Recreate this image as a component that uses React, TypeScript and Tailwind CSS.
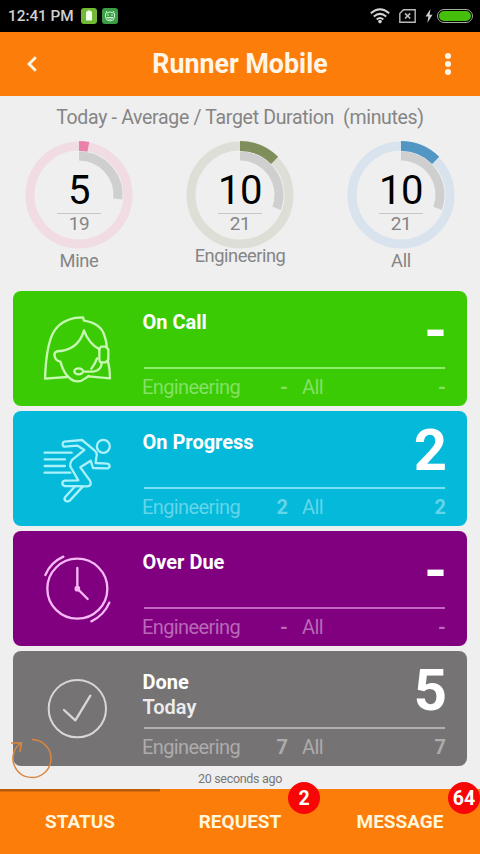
import type { ReactNode } from "react";
import clsx from "clsx";

type Gauge = {
  label: string;
  value: number;
  target: number;
  valueAngle: number;
  targetAngle: number;
  color: string;
  track: string;
};

type StatusCard = {
  title: string;
  subtitle?: string;
  count: string;
  engineering: string;
  all: string;
  bg: string;
  line: string;
  text: string;
  icon: ReactNode;
};

const gauges: Gauge[] = [
  {
    label: "Mine",
    value: 5,
    target: 19,
    valueAngle: 11,
    targetAngle: 96,
    color: "#e982ab",
    track: "#f2dce4",
  },
  {
    label: "Engineering",
    value: 10,
    target: 21,
    valueAngle: 45,
    targetAngle: 110,
    color: "#7f8f5c",
    track: "#dddfd6",
  },
  {
    label: "All",
    value: 10,
    target: 21,
    valueAngle: 45,
    targetAngle: 110,
    color: "#5296c4",
    track: "#d8e3ee",
  },
];

const cards: StatusCard[] = [
  {
    title: "On Call",
    count: "-",
    engineering: "-",
    all: "-",
    bg: "bg-[#3acb05]",
    line: "bg-[#8fec6c]",
    text: "text-[#83e164]",
    icon: <AgentIcon />,
  },
  {
    title: "On Progress",
    count: "2",
    engineering: "2",
    all: "2",
    bg: "bg-[#04b9da]",
    line: "bg-[#74e0f2]",
    text: "text-[#62d5ea]",
    icon: <RunnerIcon />,
  },
  {
    title: "Over Due",
    count: "-",
    engineering: "-",
    all: "-",
    bg: "bg-[#80007f]",
    line: "bg-[#c467c4]",
    text: "text-[#b968b9]",
    icon: <ClockIcon />,
  },
  {
    title: "Done",
    subtitle: "Today",
    count: "5",
    engineering: "7",
    all: "7",
    bg: "bg-[#757374]",
    line: "bg-[#b0aeaf]",
    text: "text-[#adabac]",
    icon: <CheckIcon />,
  },
];

const tabs = [
  { label: "STATUS", active: true },
  { label: "REQUEST", badge: 2 },
  { label: "MESSAGE", badge: 64 },
];

function CardIcon({ color, children }: { color: string; children: ReactNode }) {
  return (
    <svg
      className="w-[74px] h-[74px]"
      viewBox="120 80 222 222"
      fill="none"
      stroke={color}
      strokeWidth="7"
      strokeLinecap="round"
      strokeLinejoin="round"
    >
      {children}
    </svg>
  );
}

function AgentIcon() {
  return (
    <CardIcon color="#c9f8b4">
      <path d="M201 275 L135 280 C137 225 143 165 164 135 C183 108 215 96 249 96 L252 106 C282 111 306 126 313 150 C317 162 320 173 320 184" />
      <path d="M252 136 C242 170 218 192 183 197 C168 196 161 202 164 213 C166 222 173 228 181 229 C187 250 196 270 212 281 C225 291 242 290 256 279 L266 272" />
      <path d="M252 136 C261 160 276 180 298 192" />
      <path d="M303 184 H317 L325 192 V223 L317 231 H302 Q298 229 298 222 V194 Q298 187 303 184 Z" />
      <path d="M324 228 C328 244 330 262 330 279 L266 273" />
      <path d="M291 219 C287 232 280 242 274 250 M306 232 C303 250 293 258 280 259 H251" />
      <ellipse cx="236" cy="258" rx="13" ry="9" />
    </CardIcon>
  );
}

function RunnerIcon() {
  return (
    <CardIcon color="#a9f1fb">
      <circle cx="310" cy="123" r="19.5" />
      <path d="M134 142 H215 M134 162 H195 M134 182 H195 M134 202 H211" />
      <path d="M233 121 L193 124 C186 122 186 111 193 109 L246 104 L281 133 C290 140 293 147 289 156 L287 173 L322 175 C331 177 331 187 322 189 L279 188 L272 166 L241 186 L270 226 C275 236 271 242 263 243 L194 242 C185 240 185 228 194 226 L235 225 L212 185 C208 176 211 171 217 163 L253 134 Z" />
      <path d="M224 244 L195 276 C190 286 202 292 210 285 L248 244" />
    </CardIcon>
  );
}

function ClockIcon() {
  return (
    <CardIcon color="#f6b8f6">
      <circle cx="232" cy="190" r="90" />
      <circle cx="232" cy="190" r="5" />
      <path d="M232 128 V190 L263 221" />
      <path d="M136 149 Q151 112 190 94 M328 232 Q312 270 274 288" />
    </CardIcon>
  );
}

function CheckIcon() {
  return (
    <CardIcon color="#d8d6d7">
      <circle cx="232" cy="190" r="86" strokeWidth="6" />
      <path d="M192 194 L226 225 L271 151" />
    </CardIcon>
  );
}

function StatusBar() {
  return (
    <div className="h-8 bg-black flex items-center justify-between pl-2 pr-[7px]">
      <div className="flex items-center">
        <span className="w-[73px] pt-px text-[15.3px] font-medium text-[#d0d0d0] whitespace-nowrap">
          12:41 PM
        </span>
        <svg className="w-4 h-4" viewBox="0 0 16 16">
          <rect width="16" height="16" rx="3" fill="#72ba36" />
          <path d="M5 3.5h1.5V2.5h3v1H11v9H5z" fill="#f2ffe8" />
        </svg>
        <svg
          className="w-4 h-4 ml-[5px]"
          viewBox="0 0 16 16"
          fill="none"
          stroke="#c9f4cd"
        >
          <rect width="16" height="16" rx="3" fill="#3c9d46" stroke="none" />
          <path d="M4 3l1.3 1.4M12 3l-1.3 1.4M3.5 5.2Q8 2.8 12.5 5.2V9Q12 13 8 13T3.5 9ZM5 7h2M9 7h2M5 9.5h6Q9.5 11.5 8 11.5T5 9.5" />
        </svg>
      </div>
      <div className="flex items-center">
        <svg className="w-5 h-4" viewBox="0 0 20 16" fill="none" stroke="#d5d5d5">
          <path
            d="M.8 5.3Q10-2.7 19.2 5.3M3.8 8.6Q10 3.2 16.2 8.6M6.7 11.5Q10 8.6 13.3 11.5"
            strokeWidth="2"
          />
          <circle cx="10" cy="13.6" r="1.8" fill="#d5d5d5" stroke="none" />
        </svg>
        <svg
          className="w-[17px] h-[14px] ml-[9px]"
          viewBox="0 0 17 14"
          fill="none"
          stroke="#b9b9b9"
        >
          <path d="M4.5 .8H16.2V13.2H.8V4.5Z" strokeWidth="1.4" />
          <path d="M6 4.3l5.2 5.2M11.2 4.3L6 9.5" strokeWidth="1.7" />
        </svg>
        <svg className="w-2 h-3.5 ml-[9px]" viewBox="0 0 8 14" fill="#d0d0d0">
          <path d="M5.5 0L.5 7.6H3.4L2.3 14 7.5 5.8H4.6Z" />
        </svg>
        <div className="ml-1 w-9 h-[14px] rounded-full border border-[#a9aba7] p-[1px]">
          <div className="h-full rounded-full bg-[#45bf0b]" />
        </div>
      </div>
    </div>
  );
}

function Header() {
  return (
    <header className="h-16 bg-[#fd7d0a] flex items-center justify-between text-[#fff6e8]">
      <button className="w-16 h-full flex items-center justify-center">
        <svg
          className="w-3 h-4"
          viewBox="0 0 12 16"
          fill="none"
          stroke="currentColor"
          strokeWidth="2.8"
        >
          <path d="M9.8 1.2L3 8l6.8 6.8" />
        </svg>
      </button>
      <h1 className="pt-px text-[26.8px] font-bold whitespace-nowrap">
        Runner Mobile
      </h1>
      <button className="w-16 h-full flex flex-col items-center justify-center gap-[2px]">
        <span className="w-1.5 h-1.5 rounded-full bg-current" />
        <span className="w-1.5 h-1.5 rounded-full bg-current" />
        <span className="w-1.5 h-1.5 rounded-full bg-current" />
      </button>
    </header>
  );
}

// Clockwise arc that starts at twelve o'clock
function arcPath(radius: number, angle: number) {
  const rad = (angle * Math.PI) / 180;
  const x = 54 + radius * Math.sin(rad);
  const y = 54 - radius * Math.cos(rad);
  return `M54 ${54 - radius} A${radius} ${radius} 0 0 1 ${x} ${y}`;
}

function DurationGauge({ gauge }: { gauge: Gauge }) {
  return (
    <div className="w-[108px] flex flex-col items-center">
      <div className="relative w-[108px] h-[108px]">
        <svg viewBox="0 0 108 108" fill="none" strokeWidth="9">
          <circle cx="54" cy="54" r="49" stroke={gauge.track} />
          <path d={arcPath(49, gauge.valueAngle)} stroke={gauge.color} strokeWidth="10" />
          <path d={arcPath(39, gauge.targetAngle)} stroke="#d0cfcf" />
        </svg>
        <div className="absolute inset-0 flex flex-col items-center">
          <span className="mt-[29px] h-[42px] leading-[42px] text-[40px] tracking-[-0.5px] text-black">
            {gauge.value}
          </span>
          <div className="w-11 h-px bg-[#c6c6c6] mt-[1px]" />
          <span className="text-[19px] leading-5 tracking-[-0.4px] text-[#858585]">
            {gauge.target}
          </span>
        </div>
      </div>
      <span
        className={clsx(
          "text-[18.3px] leading-6 text-[#858585]",
          gauge.label === "Engineering"
            ? "-mt-[5px] tracking-[-0.45px]"
            : "tracking-[-0.3px]"
        )}
      >
        {gauge.label}
      </span>
    </div>
  );
}

function Card({ card }: { card: StatusCard }) {
  return (
    <div className={clsx("h-[114.5px] rounded-[8px] flex", card.bg)}>
      <div className="w-[129px] pl-[27px] pt-[21px]">{card.icon}</div>
      <div className="flex-1 pr-[21px]">
        <div className="h-[76px] flex justify-between text-white">
          <div className="pl-[0.5px] pt-[18.5px] text-[20px] leading-[25px] font-bold">
            <div>{card.title}</div>
            {card.subtitle && (
              <div className="text-[#ececec] font-semibold">{card.subtitle}</div>
            )}
          </div>
          <div className="-mr-px pt-px text-[58px] leading-[76px] font-bold">
            {card.count}
          </div>
        </div>
        <div className={clsx("h-[1.5px] ml-[2px] mr-px", card.line)} />
        <div
          className={clsx(
            "flex pt-[6px] text-[20px] leading-[25px] whitespace-nowrap",
            card.text
          )}
        >
          <div className="w-[146px] flex justify-between">
            <span className="tracking-[-0.6px]">Engineering</span>
            <span className="font-bold">{card.engineering}</span>
          </div>
          <div className="flex-1 pl-[14px] flex justify-between">
            <span className="tracking-[-0.6px]">All</span>
            <span className="font-bold">{card.all}</span>
          </div>
        </div>
      </div>
    </div>
  );
}

function TabBar() {
  return (
    <nav className="h-[65.5px] bg-[#fd7d0a] grid grid-cols-3">
      {tabs.map((tab) => (
        <button
          key={tab.label}
          className={clsx(
            "relative h-full pt-[1px] text-[19px] font-bold text-[#fff6dc]",
            tab.active && "shadow-[inset_0_2.5px_0_#b65a0b]"
          )}
        >
          {tab.label}
          {tab.badge && (
            <span className="absolute right-0 -top-[7px] w-8 h-8 rounded-full bg-[#f80505] text-white text-[19.5px] leading-[33px]">
              {tab.badge}
            </span>
          )}
        </button>
      ))}
    </nav>
  );
}

export default function App() {
  return (
    <div className="w-[480px] h-[854px] overflow-hidden bg-[#efefef] font-[Roboto,sans-serif] flex flex-col">
      <StatusBar />
      <Header />
      <p className="pt-[10px] text-center text-[19.5px] leading-6 tracking-[-0.32px] text-[#858585] whitespace-pre">
        {"Today - Average / Target Duration  (minutes)"}
      </p>
      <section className="h-[149px] mt-[11px] px-[25px] flex justify-between">
        {gauges.map((gauge) => (
          <DurationGauge key={gauge.label} gauge={gauge} />
        ))}
      </section>
      <main className="relative px-[13px] pt-[1px] flex flex-col gap-[5.6px]">
        {cards.map((card) => (
          <Card key={card.title} card={card} />
        ))}
        {/* Refresh control hangs over the corner of the last card */}
        <svg
          className="absolute left-[10px] bottom-[-13px] w-[44px] h-[44px]"
          viewBox="0 0 44 44"
          fill="none"
          stroke="#dc873e"
          strokeWidth="1.5"
        >
          <path d="M22 4.5A19 19 0 1 1 3.8 18Q5 12 11.5 7.5M1 8H11.5L9.8 17" />
        </svg>
      </main>
      <p className="flex-1 pt-[4px] text-center text-[12.5px] leading-[18px] tracking-[-0.3px] text-[#777]">
        20 seconds ago
      </p>
      <TabBar />
    </div>
  );
}
